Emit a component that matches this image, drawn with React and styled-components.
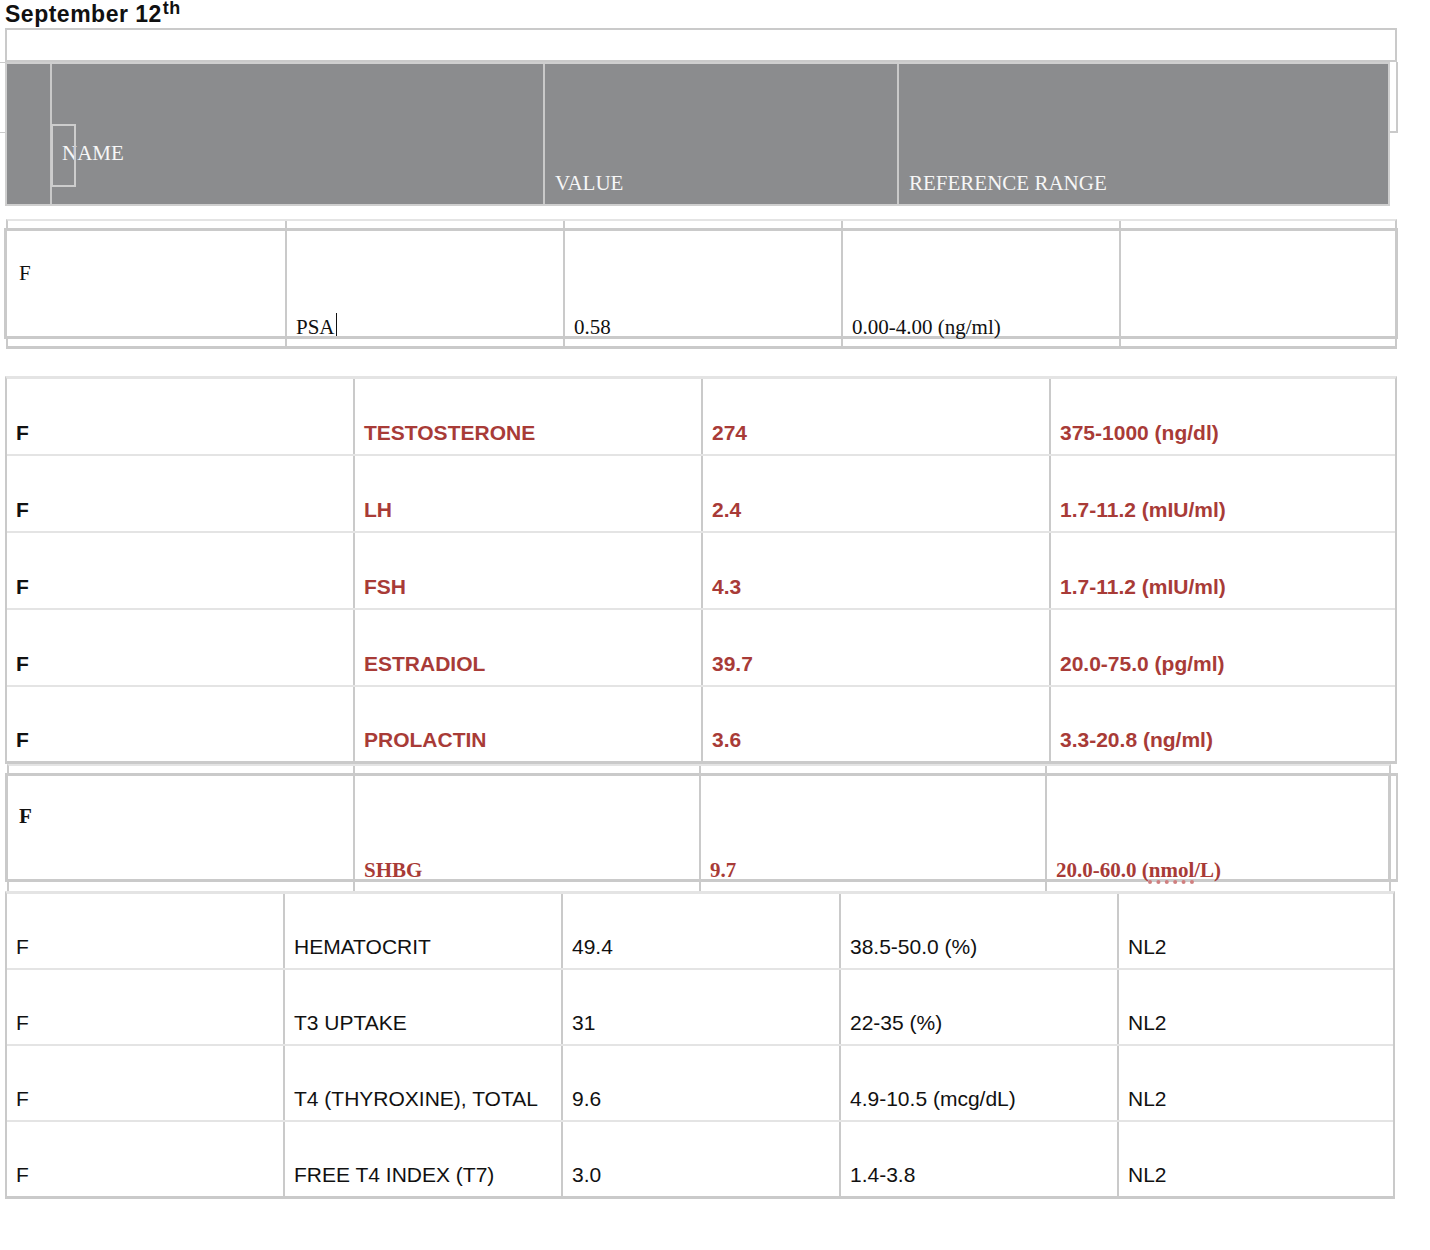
import React from "react";
import styled, { createGlobalStyle } from "styled-components";

const BORDER = "#cacaca";
const LIGHT = "#e4e4e4";
const HEAD = "#8b8c8e";
const RED = "#a83b37";

const GlobalStyle = createGlobalStyle`
  html, body { margin: 0; padding: 0; background: #fff; }
  * { box-sizing: border-box; }
`;

const Page = styled.div`
  width: 1430px;
  min-height: 1250px;
  background: #fff;
  display: flex;
  flex-direction: column;
  align-items: flex-start;
`;

const Title = styled.div`
  height: 28px;
  padding-left: 5px;
  font: bold 23px/28px "Liberation Sans", Arial, sans-serif;
  letter-spacing: 0.5px;
  color: #111;
  white-space: nowrap;
  overflow: visible;
`;

const Sup = styled.span`
  font-size: 18px;
  line-height: 0;
  vertical-align: 8px;
  margin-left: 1px;
  letter-spacing: 0.3px;
`;

const NoteBox = styled.div`
  margin-left: 5px;
  width: 1392px;
  height: 34px;
  border: 2px solid ${BORDER};
`;

const HeaderRow = styled.div`
  display: flex;
  align-items: flex-start;
`;

const EdgeTick = styled.div`
  width: 5px;
  height: 71px;
  border-top: 1px solid ${BORDER};
  border-bottom: 1px solid ${BORDER};
`;

const HeaderGrid = styled.div`
  width: 1385px;
  height: 144px;
  border: 2px solid #cfcfcf;
  background: ${HEAD};
  display: grid;
  grid-template-columns: 43px 493px 354px 1fr;
`;

const HeaderCell = styled.div`
  position: relative;
  display: flex;
  align-items: flex-end;
  padding: 0 0 ${(p) => p.$pb}px 10px;
  border-left: ${(p) => (p.$first ? "none" : "2px solid #c9c9c9")};
  color: #f6f6f6;
  font: 21px/20px "Liberation Serif", "Times New Roman", serif;
  white-space: nowrap;
`;

const NameFrame = styled.span`
  position: absolute;
  left: -1px;
  top: 60px;
  width: 25px;
  height: 63px;
  border: 2px solid #cdcdcd;
`;

const SideBox = styled.div`
  width: 8px;
  height: 71px;
  border-right: 2px solid ${BORDER};
  border-bottom: 2px solid ${BORDER};
`;

const Spacer = styled.div`
  height: ${(p) => p.$h}px;
`;

const Strip = styled.div`
  margin-left: ${(p) => p.$left}px;
  width: ${(p) => p.$width}px;
  height: ${(p) => p.$h}px;
  display: grid;
  grid-template-columns: ${(p) => p.$cols};
  border-left: 2px solid ${BORDER};
  border-right: 2px solid ${BORDER};
  border-top: ${(p) => (p.$top ? `2px solid ${LIGHT}` : "none")};
  border-bottom: ${(p) => (p.$bottom ? `3px solid ${BORDER}` : "none")};
`;

const StripCell = styled.div`
  border-left: ${(p) => (p.$first ? "none" : `2px solid ${BORDER}`)};
`;

const BigRow = styled.div`
  margin-left: ${(p) => p.$left}px;
  width: ${(p) => p.$width}px;
  height: ${(p) => p.$h}px;
  border: 3px solid ${BORDER};
  display: grid;
  grid-template-columns: ${(p) => p.$cols};
`;

const BigCell = styled.div`
  display: flex;
  align-items: ${(p) => (p.$top ? "flex-start" : "flex-end")};
  padding: ${(p) => (p.$top ? `${p.$pt}px 0 0 ${p.$pl}px` : `0 0 0 ${p.$pl}px`)};
  border-left: ${(p) => (p.$first ? "none" : `2px solid ${BORDER}`)};
  font-family: "Liberation Serif", "Times New Roman", serif;
  font-size: 21px;
  line-height: 18px;
  font-weight: ${(p) => (p.$bold ? 700 : 400)};
  color: ${(p) => p.$color || "#111"};
  white-space: nowrap;
`;

const Cursor = styled.span`
  display: inline-block;
  width: 0;
  height: 23px;
  border-left: 1.5px solid #111;
  margin-left: 1px;
  vertical-align: -4px;
`;

const Misspelled = styled.span`
  text-decoration: underline dotted #d07f7f;
  text-decoration-thickness: 4px;
  text-underline-offset: 3px;
`;

const FlexLine = styled.div`
  display: flex;
  align-items: stretch;
`;

const EdgeLine = styled.div`
  width: 7px;
  border-top: 3px solid ${BORDER};
  border-bottom: 3px solid ${BORDER};
  border-right: 2px solid ${BORDER};
`;

const Table = styled.div`
  margin-left: ${(p) => p.$left}px;
  width: ${(p) => p.$width}px;
  border-top: 3px solid ${LIGHT};
  border-left: 2px solid ${BORDER};
  border-right: 2px solid ${BORDER};
  display: flex;
  flex-direction: column;
`;

const Row = styled.div`
  display: grid;
  grid-template-columns: ${(p) => p.$cols};
  height: ${(p) => p.$h}px;
  border-bottom: ${(p) => (p.$last ? `3px solid ${BORDER}` : `2px solid ${LIGHT}`)};
`;

const Cell = styled.div`
  display: flex;
  align-items: flex-end;
  padding: 0 0 9px 9px;
  border-left: ${(p) => (p.$first ? "none" : `2px solid ${BORDER}`)};
  font-family: "Liberation Sans", Arial, sans-serif;
  font-size: 21px;
  line-height: 24px;
  font-weight: ${(p) => (p.$bold ? 700 : 400)};
  color: ${(p) => p.$color || "#111"};
  white-space: nowrap;
`;

const cols = (start, edges) => {
  const parts = [];
  let prev = start;
  edges.forEach((e) => {
    parts.push(`${e - prev}px`);
    prev = e;
  });
  parts.push("1fr");
  return parts.join(" ");
};

const psaStripCols = cols(8, [285, 563, 841, 1119]);
const psaMainCols = cols(7, [285, 563, 841, 1119]);
const hormoneCols = cols(7, [353, 701, 1049]);
const shbgStripCols = cols(9, [353, 699, 1045]);
const shbgMainCols = cols(8, [353, 699, 1045]);
const bottomCols = cols(7, [283, 561, 839, 1117]);

const hormones = [
  ["TESTOSTERONE", "274", "375-1000 (ng/dl)"],
  ["LH", "2.4", "1.7-11.2 (mIU/ml)"],
  ["FSH", "4.3", "1.7-11.2 (mIU/ml)"],
  ["ESTRADIOL", "39.7", "20.0-75.0 (pg/ml)"],
  ["PROLACTIN", "3.6", "3.3-20.8 (ng/ml)"],
];

const others = [
  ["HEMATOCRIT", "49.4", "38.5-50.0 (%)", "NL2"],
  ["T3 UPTAKE", "31", "22-35 (%)", "NL2"],
  ["T4 (THYROXINE), TOTAL", "9.6", "4.9-10.5 (mcg/dL)", "NL2"],
  ["FREE T4 INDEX (T7)", "3.0", "1.4-3.8", "NL2"],
];

const StripCells = ({ n }) =>
  Array.from({ length: n }).map((_, i) => <StripCell key={i} $first={i === 0} />);

export default function App() {
  return (
    <>
      <GlobalStyle />
      <Page>
        <Title>
          September 12<Sup>th</Sup>
        </Title>
        <NoteBox />
        <HeaderRow>
          <EdgeTick />
          <HeaderGrid>
            <HeaderCell $first $pb={11} />
            <HeaderCell $pb={41}>
              <NameFrame />
              NAME
            </HeaderCell>
            <HeaderCell $pb={11}>VALUE</HeaderCell>
            <HeaderCell $pb={11}>REFERENCE RANGE</HeaderCell>
          </HeaderGrid>
          <SideBox />
        </HeaderRow>

        <Spacer $h={13} />
        <Strip $left={6} $width={1391} $h={9} $cols={psaStripCols} $top>
          <StripCells n={5} />
        </Strip>
        <BigRow $left={4} $width={1394} $h={111} $cols={psaMainCols}>
          <BigCell $first $top $pt={33} $pl={12}>F</BigCell>
          <BigCell $pl={9}>
            PSA<Cursor />
          </BigCell>
          <BigCell $pl={9}>0.58</BigCell>
          <BigCell $pl={9}>0.00-4.00 (ng/ml)</BigCell>
          <BigCell $pl={9} />
        </BigRow>
        <Strip $left={6} $width={1391} $h={10} $cols={psaStripCols} $bottom>
          <StripCells n={5} />
        </Strip>

        <Spacer $h={27} />
        <Table $left={5} $width={1392}>
          {hormones.map((h, i) => (
            <Row key={h[0]} $cols={hormoneCols} $h={77} $last={i === hormones.length - 1}>
              <Cell $first $bold>F</Cell>
              <Cell $bold $color={RED}>{h[0]}</Cell>
              <Cell $bold $color={RED}>{h[1]}</Cell>
              <Cell $bold $color={RED}>{h[2]}</Cell>
            </Row>
          ))}
        </Table>

        <Strip $left={7} $width={1384} $h={9} $cols={shbgStripCols} $top>
          <StripCells n={4} />
        </Strip>
        <FlexLine>
          <BigRow $left={5} $width={1386} $h={109} $cols={shbgMainCols}>
            <BigCell $first $top $pt={31} $pl={11} $bold>F</BigCell>
            <BigCell $pl={9} $bold $color={RED}>SHBG</BigCell>
            <BigCell $pl={9} $bold $color={RED}>9.7</BigCell>
            <BigCell $pl={9} $bold $color={RED}>
              <span>
                20.0-60.0 (<Misspelled>nmol</Misspelled>/L)
              </span>
            </BigCell>
          </BigRow>
          <EdgeLine />
        </FlexLine>
        <Strip $left={7} $width={1384} $h={9} $cols={shbgStripCols}>
          <StripCells n={4} />
        </Strip>

        <Table $left={5} $width={1390}>
          {others.map((o, i) => (
            <Row key={o[0]} $cols={bottomCols} $h={i === others.length - 1 ? 77 : 76} $last={i === others.length - 1}>
              <Cell $first>F</Cell>
              <Cell>{o[0]}</Cell>
              <Cell>{o[1]}</Cell>
              <Cell>{o[2]}</Cell>
              <Cell>{o[3]}</Cell>
            </Row>
          ))}
        </Table>
      </Page>
    </>
  );
}
